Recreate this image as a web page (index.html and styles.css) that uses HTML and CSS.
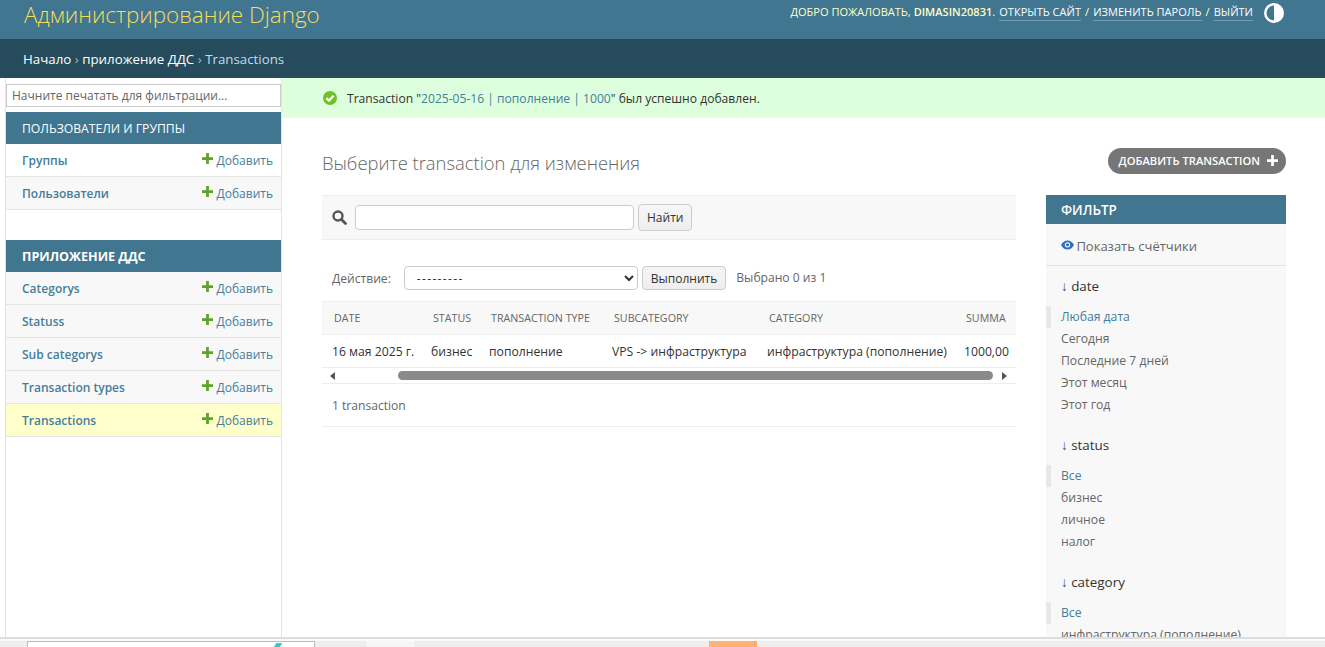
FILE: index.html
```html
<!DOCTYPE html>
<html lang="ru">
<head>
  <meta charset="UTF-8" />
  <title>Выберите transaction для изменения</title>
  <link rel="stylesheet" href="styles.css">
</head>
<body>
  <div class="page">
    <div class="top-bar">
      <div class="brand">Администрирование Django</div>
      <div class="user-tools">
        <span>Добро пожаловать, <strong>dimasin20831</strong>.</span>
        <a href="#">Открыть сайт</a> /
        <a href="#">Изменить пароль</a> /
        <a href="#">Выйти</a>
        <svg class="theme-icon" width="20" height="20" viewBox="0 0 20 20">
          <circle cx="10" cy="10" r="10" fill="#fff"/>
          <path d="M10 2.500a7.500 7.500 0 0 0 0 15z" fill="#417690"/>
        </svg>
      </div>
    </div>
    <div class="crumbs">
      <a href="#">Начало</a> <span class="sep">›</span> <a href="#">приложение ДДС</a> <span class="sep">›</span> Transactions
    </div>

    <div class="main">
      <div class="sidebar">
        <input class="nav-filter" type="text" placeholder="Начните печатать для фильтрации...">

        <div class="module">
          <div class="caption">Пользователи и группы</div>
          <div class="nav-row"><a href="#" class="model">Группы</a><a href="#" class="add"><svg class="plus" viewBox="0 0 12 12"><path d="M4.500 0h3v4.500H12v3H7.500V12h-3V7.500H0v-3h4.500z"/></svg>Добавить</a></div>
          <div class="nav-row alt"><a href="#" class="model">Пользователи</a><a href="#" class="add"><svg class="plus" viewBox="0 0 12 12"><path d="M4.500 0h3v4.500H12v3H7.500V12h-3V7.500H0v-3h4.500z"/></svg>Добавить</a></div>
        </div>

        <div class="module">
          <div class="caption bold">Приложение ДДС</div>
          <div class="nav-row alt"><a href="#" class="model">Categorys</a><a href="#" class="add"><svg class="plus" viewBox="0 0 12 12"><path d="M4.500 0h3v4.500H12v3H7.500V12h-3V7.500H0v-3h4.500z"/></svg>Добавить</a></div>
          <div class="nav-row alt"><a href="#" class="model">Statuss</a><a href="#" class="add"><svg class="plus" viewBox="0 0 12 12"><path d="M4.500 0h3v4.500H12v3H7.500V12h-3V7.500H0v-3h4.500z"/></svg>Добавить</a></div>
          <div class="nav-row alt"><a href="#" class="model">Sub categorys</a><a href="#" class="add"><svg class="plus" viewBox="0 0 12 12"><path d="M4.500 0h3v4.500H12v3H7.500V12h-3V7.500H0v-3h4.500z"/></svg>Добавить</a></div>
          <div class="nav-row alt"><a href="#" class="model">Transaction types</a><a href="#" class="add"><svg class="plus" viewBox="0 0 12 12"><path d="M4.500 0h3v4.500H12v3H7.500V12h-3V7.500H0v-3h4.500z"/></svg>Добавить</a></div>
          <div class="nav-row current"><a href="#" class="model">Transactions</a><a href="#" class="add"><svg class="plus" viewBox="0 0 12 12"><path d="M4.500 0h3v4.500H12v3H7.500V12h-3V7.500H0v-3h4.500z"/></svg>Добавить</a></div>
        </div>
      </div>

      <div class="content">
        <div class="message">
          <svg class="ok-icon" width="14" height="14" viewBox="0 0 14 14">
            <circle cx="7" cy="7" r="7" fill="#70bf2b"/>
            <path d="M3.400 7.100l2.500 2.500 4.700-4.900" fill="none" stroke="#fff" stroke-width="2.300"/>
          </svg>
          <span>Transaction "<a href="#">2025-05-16 | пополнение | 1000</a>" был успешно добавлен.</span>
        </div>

        <div class="content-inner">
          <div class="title-row">
            <h1>Выберите transaction для изменения</h1>
            <a href="#" class="add-btn">Добавить transaction<svg width="11" height="11" viewBox="0 0 12 12"><path d="M4.500 0h3v4.500H12v3H7.500V12h-3V7.500H0v-3h4.500z" fill="#fff"/></svg></a>
          </div>

          <div class="columns">
            <div class="changelist">
              <div class="search-bar">
                <svg width="15" height="15" viewBox="0 0 15 15">
                  <circle cx="6" cy="6" r="4.500" fill="none" stroke="#555" stroke-width="2.400"/>
                  <path d="M9.500 9.500l4 4" stroke="#555" stroke-width="2.800" stroke-linecap="round"/>
                </svg>
                <input class="search-input" type="text">
                <button class="btn">Найти</button>
              </div>

              <div class="actions">
                <label>Действие:</label>
                <select class="action-select"><option>---------</option></select>
                <button class="btn">Выполнить</button>
                <span class="selected">Выбрано 0 из 1</span>
              </div>

              <div class="table-wrap">
                <table>
                  <colgroup>
                    <col class="c-date"><col class="c-status"><col class="c-type"><col class="c-sub"><col class="c-cat"><col class="c-sum">
                  </colgroup>
                  <thead>
                    <tr><th>Date</th><th>Status</th><th>Transaction type</th><th>Subcategory</th><th>Category</th><th>Summa</th></tr>
                  </thead>
                  <tbody>
                    <tr><td>16 мая 2025 г.</td><td>бизнес</td><td>пополнение</td><td>VPS -&gt; инфраструктура</td><td>инфраструктура (пополнение)</td><td>1000,00</td></tr>
                  </tbody>
                </table>
              </div>
              <div class="scroll-bar">
                <span class="arrow left"></span>
                <div class="track"><div class="thumb"></div></div>
                <span class="arrow right"></span>
              </div>
              <div class="paginator">1 transaction</div>
            </div>

            <div class="filter">
              <div class="filter-head">Фильтр</div>
              <div class="counts">
                <svg class="eye" width="13" height="10" viewBox="0 0 13 10">
                  <path d="M0 5c1.600-3 3.800-4.500 6.500-4.500S11.400 2 13 5c-1.600 3-3.800 4.500-6.500 4.500S1.600 8 0 5z" fill="#2f6fc0"/>
                  <circle cx="6.500" cy="4.800" r="2.600" fill="#fff"/>
                  <circle cx="6.500" cy="4.800" r="1.600" fill="#2f6fc0"/>
                </svg>
                Показать счётчики
              </div>

              <div class="filter-group">
                <h3><span class="down">↓</span> date</h3>
                <ul>
                  <li class="selected-item"><a href="#">Любая дата</a></li>
                  <li>Сегодня</li>
                  <li>Последние 7 дней</li>
                  <li>Этот месяц</li>
                  <li>Этот год</li>
                </ul>
              </div>
              <div class="filter-group">
                <h3><span class="down">↓</span> status</h3>
                <ul>
                  <li class="selected-item"><a href="#">Все</a></li>
                  <li>бизнес</li>
                  <li>личное</li>
                  <li>налог</li>
                </ul>
              </div>
              <div class="filter-group">
                <h3><span class="down">↓</span> category</h3>
                <ul>
                  <li class="selected-item"><a href="#">Все</a></li>
                  <li>инфраструктура (пополнение)</li>
                </ul>
              </div>
            </div>
          </div>
        </div>
      </div>
    </div>
  </div>

  <div class="bottom-strip">
    <div class="strip-inner">
      <div class="strip-box"><span class="strip-mark"></span></div>
      <div class="strip-light"></div>
      <div class="strip-orange"></div>
    </div>
  </div>
</body>
</html>
```
FILE: styles.css
```css
html, body {
  margin: 0;
  padding: 0;
  height: 100%;
  overflow: hidden;
  font-family: "Open Sans", "Noto Sans", sans-serif;
  font-size: 12.100px;
  color: #333;
  background: #fff;
}

body {
  display: flex;
  flex-direction: column;
}

a {
  color: #447e9b;
  text-decoration: none;
}

.page {
  flex: 1;
  min-height: 0;
  overflow: hidden;
  display: flex;
  flex-direction: column;
}

/* HEADER */
.top-bar {
  height: 39px;
  flex: none;
  background: #417690;
  display: flex;
  justify-content: space-between;
  padding: 0 41px 0 24px;
}

.brand {
  color: #f5dd5d;
  font-size: 22.400px;
  font-weight: 300;
  line-height: 29px;
}

.user-tools {
  display: flex;
  align-items: flex-start;
  gap: 4px;
  color: #ffc;
  font-size: 11px;
  text-transform: uppercase;
  letter-spacing: 0.03px;
  line-height: 16px;
  padding-top: 4px;
}

.user-tools strong {
  font-weight: 600;
}

.user-tools a {
  color: #fff;
  border-bottom: 1px solid rgba(255, 255, 255, 0.3);
}

.theme-icon {
  margin: -1px 0 0 7px;
}

.crumbs {
  height: 39px;
  flex: none;
  box-sizing: border-box;
  background: #264b5d;
  color: #c4dce8;
  padding: 0 23px;
  line-height: 40px;
  font-size: 13.300px;
}

.crumbs a {
  color: #fff;
}

.crumbs .sep {
  color: #9fbccb;
}

.main {
  flex: 1;
  min-height: 0;
  display: flex;
}

/* SIDEBAR */
.sidebar {
  width: 275px;
  flex: none;
  margin-left: 5px;
  border-left: 1px solid #e4e4e4;
  border-right: 1px solid #e4e4e4;
  padding-top: 6px;
}

.nav-filter {
  display: block;
  width: 100%;
  height: 23px;
  box-sizing: border-box;
  margin-bottom: 5px;
  padding: 0 5px;
  border: 1px solid #ccc;
  font: inherit;
  font-size: 12px;
}

.nav-filter::placeholder {
  color: #666;
  opacity: 1;
}

.module {
  margin-bottom: 30px;
}

.caption {
  height: 32px;
  background: #417690;
  color: #fff;
  padding-left: 16px;
  line-height: 33px;
  text-transform: uppercase;
  font-size: 12.200px;
}

.caption.bold {
  font-weight: 700;
  font-size: 12.600px;
}

.nav-row {
  height: 33px;
  box-sizing: border-box;
  border-bottom: 1px solid #e4e4e4;
  display: flex;
  justify-content: space-between;
  align-items: center;
  padding: 0 8px 0 16px;
}

.nav-row.alt {
  background: #f8f8f8;
}

.nav-row.current {
  background: #ffc;
}

.model {
  font-weight: 600;
  font-size: 12px;
}

.add {
  display: flex;
  align-items: center;
  gap: 4px;
  font-size: 12px;
}

.plus {
  width: 11px;
  height: 11px;
  fill: #5fa228;
  margin-top: -3px;
}

/* CONTENT */
.content {
  flex: 1;
  min-width: 0;
}

.message {
  height: 40px;
  background: #dfd;
  display: flex;
  align-items: center;
  gap: 10px;
  padding-left: 41px;
}

.content-inner {
  padding: 30px 39px 0 40px;
}

.title-row {
  display: flex;
  justify-content: space-between;
  align-items: flex-start;
  height: 47px;
}

h1 {
  margin: 0;
  font-size: 18.400px;
  font-weight: 300;
  color: #666;
  line-height: 29px;
}

.add-btn {
  height: 26px;
  box-sizing: border-box;
  background: #767676;
  color: #fff;
  border-radius: 13px;
  padding: 0 8px 1px 11px;
  display: flex;
  align-items: center;
  gap: 7px;
  font-size: 11.200px;
  font-weight: 600;
  text-transform: uppercase;
}

.columns {
  display: flex;
  justify-content: space-between;
  align-items: flex-start;
}

.changelist {
  width: 694px;
  flex: none;
}

.search-bar {
  height: 45px;
  box-sizing: border-box;
  background: #f8f8f8;
  border-top: 1px solid #eee;
  border-bottom: 1px solid #eee;
  display: flex;
  align-items: center;
  padding-left: 10px;
  gap: 4px;
}

.search-bar svg {
  margin-right: 4px;
}

.search-input {
  width: 279px;
  height: 25px;
  box-sizing: border-box;
  border: 1px solid #ccc;
  border-radius: 4px;
  margin-top: -1px;
}

.btn {
  height: 27px;
  box-sizing: border-box;
  padding: 0 8px;
  background: linear-gradient(#f6f6f6, #eee);
  border: 1px solid #ccc;
  border-radius: 4px;
  font: inherit;
  font-size: 12px;
  color: #333;
}

.actions {
  height: 61px;
  box-sizing: border-box;
  display: flex;
  align-items: center;
  padding: 15px 0 0 10px;
  color: #666;
}

.action-select {
  width: 234px;
  height: 24px;
  margin: 0 4px 0 13px;
  padding-left: 8px;
  border: 1px solid #ccc;
  border-radius: 4px;
  background: #fff;
  font: inherit;
  letter-spacing: 1.300px;
  color: #333;
}

.actions .btn {
  height: 24px;
}

.selected {
  margin-left: 10px;
  margin-top: -2px;
}

.table-wrap {
  overflow: hidden;
}

table {
  width: 694px;
  table-layout: fixed;
  border-collapse: collapse;
}

.c-date { width: 99px; }
.c-status { width: 58px; }
.c-type { width: 123px; }
.c-sub { width: 155px; }
.c-cat { width: 197px; }
.c-sum { width: 62px; }

th {
  height: 33px;
  box-sizing: border-box;
  padding: 0 0 0 12px;
  background: #f8f8f8;
  border-top: 1px solid #eee;
  border-bottom: 1px solid #eee;
  color: #666;
  font-size: 10.700px;
  font-weight: 500;
  text-align: left;
  text-transform: uppercase;
  white-space: nowrap;
}

td {
  height: 33px;
  box-sizing: border-box;
  padding: 0 0 0 10px;
  border-bottom: 1px solid #eee;
  font-size: 12.200px;
  white-space: nowrap;
}

.scroll-bar {
  height: 16px;
  box-sizing: border-box;
  border-bottom: 1px solid #eee;
  display: flex;
  align-items: center;
}

.track {
  flex: 1;
  padding: 0 9px 0 63px;
}

.thumb {
  height: 9px;
  background: #8a8a8a;
  border-radius: 5px;
}

.arrow {
  width: 0;
  height: 0;
  border-top: 4px solid transparent;
  border-bottom: 4px solid transparent;
}

.arrow.left {
  margin-left: 8px;
  border-right: 5px solid #555;
}

.arrow.right {
  margin-right: 9px;
  border-left: 5px solid #555;
}

.paginator {
  height: 43px;
  box-sizing: border-box;
  border-bottom: 1px solid #eee;
  padding-left: 10px;
  line-height: 43px;
  color: #666;
}

/* FILTER */
.filter {
  width: 240px;
  flex: none;
  background: #f8f8f8;
  padding-bottom: 20px;
}

.filter-head {
  height: 29px;
  background: #417690;
  color: #fff;
  font-size: 13.400px;
  font-weight: 600;
  text-transform: uppercase;
  padding-left: 15px;
  line-height: 30px;
}

.counts {
  height: 42px;
  box-sizing: border-box;
  border-bottom: 1px solid #e4e4e4;
  padding-left: 15px;
  line-height: 44px;
  color: #666;
  font-size: 13px;
}

.eye {
  vertical-align: 1px;
  margin-right: -1px;
}

.filter-group {
  margin-bottom: 9px;
}

.filter-group h3 {
  margin: 0;
  padding: 10px 15px 0;
  height: 40px;
  box-sizing: border-box;
  font-size: 13.400px;
  font-weight: 400;
  line-height: 20px;
}

.down {
  color: #264b5d;
}

.filter-group ul {
  margin: 0;
  padding: 0;
  list-style: none;
  color: #666;
  font-size: 12.200px;
}

.filter-group li {
  height: 22px;
  line-height: 22px;
  padding-left: 15px;
}

.filter-group li.selected-item {
  border-left: 5px solid #e8e8e8;
  padding-left: 10px;
}

/* BOTTOM STRIP */
.bottom-strip {
  height: 10px;
  flex: none;
  box-sizing: border-box;
  border-top: 2px solid #ddd;
  background: #fafafa;
  padding-top: 2px;
  overflow: hidden;
}

.strip-inner {
  height: 100%;
  display: flex;
  background: #eee;
}

.strip-box {
  width: 288px;
  margin-left: 27px;
  box-sizing: border-box;
  background: #fff;
  border: 1px solid #bbb;
  border-bottom: none;
  position: relative;
}

.strip-mark {
  position: absolute;
  right: 34px;
  top: 1px;
  width: 6px;
  height: 8px;
  background: #3cc;
  transform: skewX(-30deg);
}

.strip-light {
  width: 48px;
  margin-left: 51px;
  background: #f6f6f6;
}

.strip-orange {
  width: 48px;
  margin-left: 295px;
  background: linear-gradient(to right, #ffb273 45px, #f9a45e 45px, #f9a45e 46px, #ffb273 46px);
}
```
